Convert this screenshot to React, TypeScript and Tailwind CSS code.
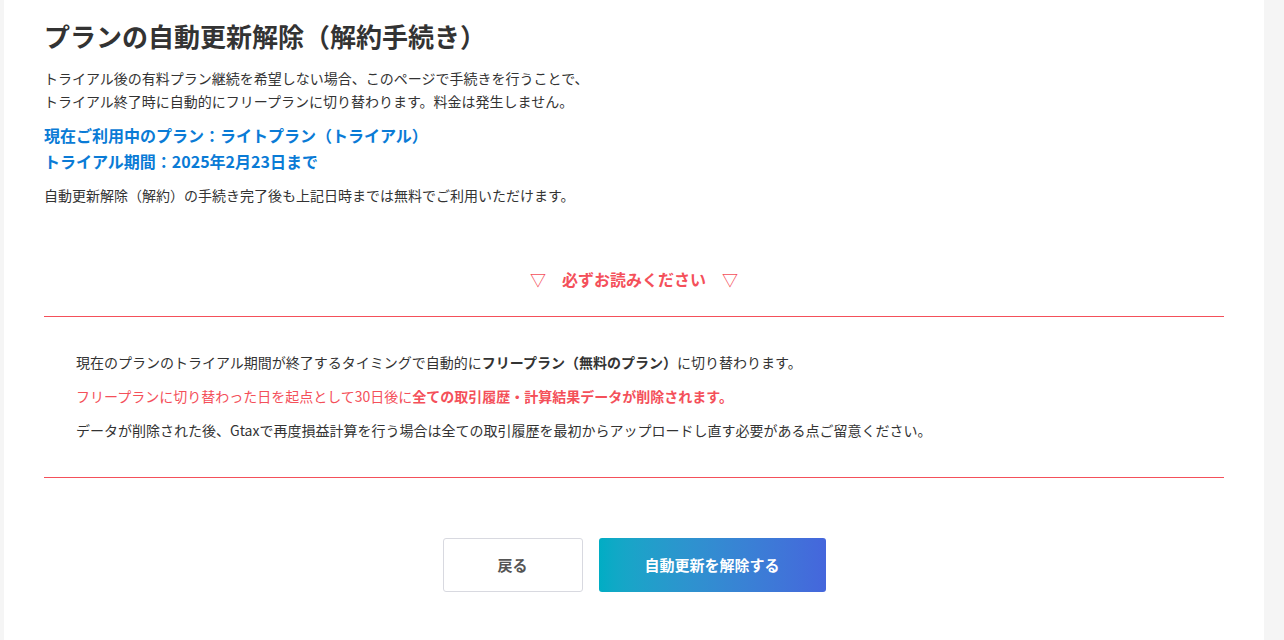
export default function App() {
    return (
        <div
            className="min-h-[640px] bg-[#f5f5f5] pl-[4px] pr-[20px]"
            style={{ fontFamily: '"Noto Sans CJK JP", "Noto Sans", sans-serif' }}
        >
            <div className="min-h-[640px] bg-white px-[40px] pt-[18px] pb-[40px] text-[#333]">
                <h1 className="text-[26px] font-bold leading-[1.4]">
                    プランの自動更新解除（解約手続き）
                </h1>
                <p className="mt-[13px] text-[14px] leading-[23px]">
                    トライアル後の有料プラン継続を希望しない場合、このページで手続きを行うことで、
                    <br />
                    トライアル終了時に自動的にフリープランに切り替わります。料金は発生しません。
                </p>
                <div className="mt-[9px] text-[16px] font-bold leading-[26px] text-[#0a7bd6]">
                    <p>現在ご利用中のプラン：ライトプラン（トライアル）</p>
                    <p>トライアル期間：2025年2月23日まで</p>
                </div>
                <p className="mt-[10px] text-[14px] leading-[23px]">
                    自動更新解除（解約）の手続き完了後も上記日時までは無料でご利用いただけます。
                </p>

                <p className="mt-[60px] text-center text-[16px] font-bold leading-[24px] text-[#f4505a]">
                    ▽　必ずお読みください　▽
                </p>

                <div className="mt-[25px] border-y border-[#f4505a] px-[32px] pt-[33px] pb-[35px]">
                    <div className="space-y-[10px] text-[14px] leading-[24px]">
                        <p>
                            現在のプランのトライアル期間が終了するタイミングで自動的に
                            <span className="font-bold">フリープラン（無料のプラン）</span>
                            に切り替わります。
                        </p>
                        <p className="text-[#f4505a]">
                            フリープランに切り替わった日を起点として30日後に
                            <span className="font-bold">全ての取引履歴・計算結果データが削除されます。</span>
                        </p>
                        <p>
                            データが削除された後、Gtaxで再度損益計算を行う場合は全ての取引履歴を最初からアップロードし直す必要がある点ご留意ください。
                        </p>
                    </div>
                </div>

                <div className="mt-[60px] flex justify-center gap-[16px]">
                    <button className="h-[54px] w-[140px] rounded-[3px] border border-[#d8d9e0] bg-white text-[15px] font-bold text-[#555]">
                        戻る
                    </button>
                    <button className="h-[54px] w-[227px] rounded-[3px] bg-gradient-to-r from-[#00adc4] to-[#4566dc] text-[15px] font-bold text-white">
                        自動更新を解除する
                    </button>
                </div>
            </div>
        </div>
    );
}
